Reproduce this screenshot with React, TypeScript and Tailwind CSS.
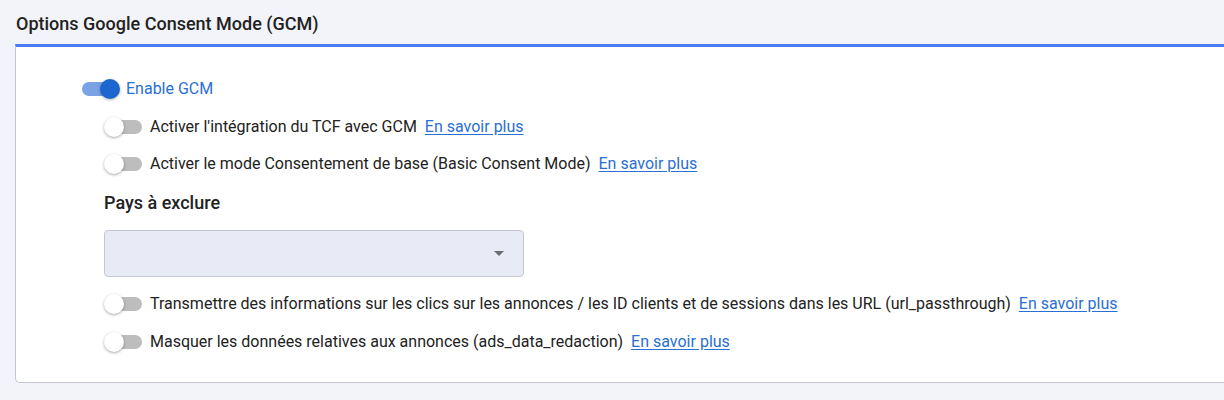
import React from "react";

function Switch({ on }: { on?: boolean }) {
  if (on) {
    return (
      <span className="relative block w-[38px] h-5 shrink-0">
        <span className="absolute left-0 top-[3px] w-[34px] h-[14px] rounded-full bg-[#7aa3e5]" />
        <span className="absolute left-[18px] top-0 w-5 h-5 rounded-full bg-[#1b66cf] shadow-[0_1px_3px_rgba(0,0,0,0.3)]" />
      </span>
    );
  }
  return (
    <span className="relative block w-[38px] h-5 shrink-0">
      <span className="absolute left-[3px] top-[3px] w-[35px] h-[14px] rounded-full bg-[#bdbdbd]" />
      <span className="absolute left-0 top-0 w-5 h-5 rounded-full bg-white shadow-[0_1px_3px_rgba(0,0,0,0.35)]" />
    </span>
  );
}

function OptionRow({ label, className = "" }: { label: string; className?: string }) {
  return (
    <div className={"flex items-center h-5 " + className}>
      <Switch />
      <span className="ml-2 text-[16px] text-[#222]">{label}</span>
      <a href="#" className="ml-2 text-[16px] text-[#2a6fd3] underline underline-offset-2">
        En savoir plus
      </a>
    </div>
  );
}

export default function App() {
  return (
    <div
      className="min-h-[400px] bg-[#f3f4f9] overflow-hidden"
      style={{ fontFamily: "Roboto, 'Liberation Sans', sans-serif" }}
    >
      <h2 className="pl-4 pt-3 text-[18px] leading-6 font-medium text-[#222]">
        Options Google Consent Mode (GCM)
      </h2>
      <div className="mt-2 ml-[15px] -mr-4 bg-white border-t-[3px] border-t-[#4a7cf6] border-l border-b border-l-[#c3c6d1] border-b-[#c3c6d1] rounded-bl-[5px]">
        <div className="pl-[66px] pt-[32px] pb-[30px]">
          <div className="flex items-center h-5">
            <Switch on />
            <span className="ml-[6px] text-[16px] text-[#2a6fd3]">Enable GCM</span>
          </div>
          <div className="ml-[22px]">
            <OptionRow className="mt-[18px]" label="Activer l'intégration du TCF avec GCM" />
            <OptionRow className="mt-[17px]" label="Activer le mode Consentement de base (Basic Consent Mode)" />
            <div className="mt-[17px] text-[18px] leading-6 font-medium text-[#222]">Pays à exclure</div>
            <div className="mt-[15px] w-[420px] h-[47px] rounded-[4px] border border-[#c3c7d3] bg-[#e8eaf5] flex items-center justify-end pr-[19px]">
              <svg width="10" height="5" viewBox="0 0 10 5" className="mt-[-1px]">
                <path d="M0 0 L10 0 L5 5 Z" fill="#6b6b70" />
              </svg>
            </div>
            <OptionRow
              className="mt-[17px]"
              label="Transmettre des informations sur les clics sur les annonces / les ID clients et de sessions dans les URL (url_passthrough)"
            />
            <OptionRow className="mt-[18px]" label="Masquer les données relatives aux annonces (ads_data_redaction)" />
          </div>
        </div>
      </div>
    </div>
  );
}
